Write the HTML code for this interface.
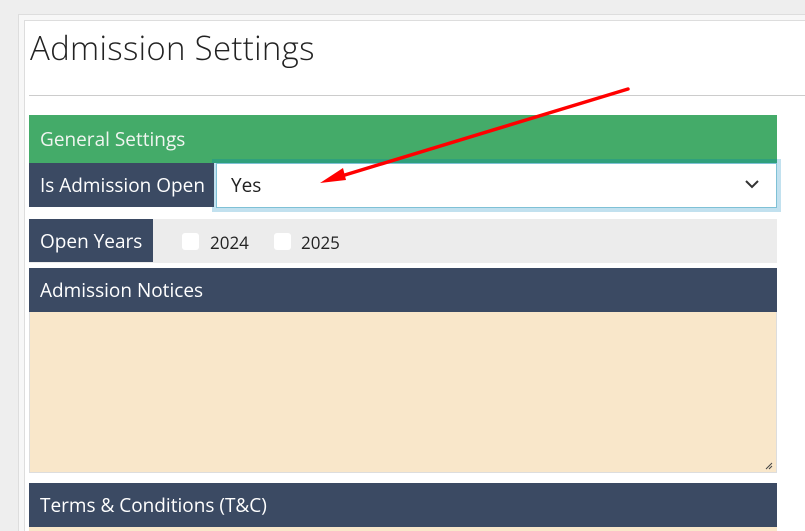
<!DOCTYPE html>
<html><head><style>
*{box-sizing:border-box;margin:0;padding:0}
html,body{width:805px;height:531px;overflow:hidden}
body{background:#eeeeee;position:relative;font-family:"Open Sans","Liberation Sans",sans-serif}
.a{position:absolute}
.lbl{background:#3b4a63;color:#fff;font-size:19px;line-height:44px;padding-left:11px}
.cb{position:absolute;width:17px;height:17px;background:#fff;border-radius:3px;top:233px}
</style></head><body>
<div class="a" style="left:18px;top:14px;width:800px;height:530px;border:1px solid #ddd;background:#f7f7f7"></div>
<div class="a" style="left:24px;top:20px;width:800px;height:530px;border:1px solid #ddd;background:#fff"></div>
<div class="a" style="left:30px;top:25px;font-size:33px;color:#222;font-weight:300;letter-spacing:0.3px">Admission Settings</div>
<div class="a" style="left:29px;top:95px;width:776px;height:1px;background:#ccc"></div>
<div class="a" style="left:29px;top:115px;width:748px;height:48px;background:#44ab69;font-size:19px;line-height:48px;padding-left:11px;color:#f0f5f0">General Settings</div>
<div class="a" style="left:212px;top:159px;width:569px;height:53px;background:#c2e1ef"></div>
<div class="a" style="left:212px;top:159px;width:565px;height:4px;background:#2fa07c"></div>
<div class="a lbl" style="left:29px;top:163px;width:185px;height:44px">Is Admission Open</div>
<div class="a" style="left:216px;top:163px;width:561px;height:45px;background:#fff;border:1px solid #7fc1d6;font-size:19px;line-height:43px;padding-left:14px;color:#222">Yes</div>
<svg class="a" style="left:744px;top:178px" width="16" height="12"><path d="M2 3 L8 9 L14 3" stroke="#333" stroke-width="2" fill="none"/></svg>
<div class="a" style="left:29px;top:219px;width:748px;height:44px;background:#ececec"></div>
<div class="a lbl" style="left:29px;top:219px;width:124px;height:43px">Open Years</div>
<div class="cb" style="left:182px"></div>
<div class="a" style="left:210px;top:231px;font-size:17px;color:#222">2024</div>
<div class="cb" style="left:274px"></div>
<div class="a" style="left:301px;top:231px;font-size:17px;color:#222">2025</div>
<div class="a lbl" style="left:29px;top:268px;width:748px;height:44px">Admission Notices</div>
<div class="a" style="left:29px;top:312px;width:748px;height:161px;background:#f9e7ca;border:1px solid #ddd;border-top:none"></div>
<svg class="a" style="left:764px;top:461px" width="10" height="10"><path d="M2 8 L8 2 M5 8 L8 5" stroke="#444" stroke-width="1"/></svg>
<div class="a lbl" style="left:29px;top:483px;width:748px;height:44px">Terms &amp; Conditions (T&amp;C)</div>
<div class="a" style="left:29px;top:527px;width:748px;height:4px;background:#f9e7ca"></div>
<svg class="a" style="left:0;top:0" width="805" height="531"><line x1="628" y1="89" x2="335" y2="178" stroke="#f00" stroke-width="3.5" stroke-linecap="round"/><polygon points="320,183 343,168 346,180" fill="#f00"/></svg>
</body></html>
